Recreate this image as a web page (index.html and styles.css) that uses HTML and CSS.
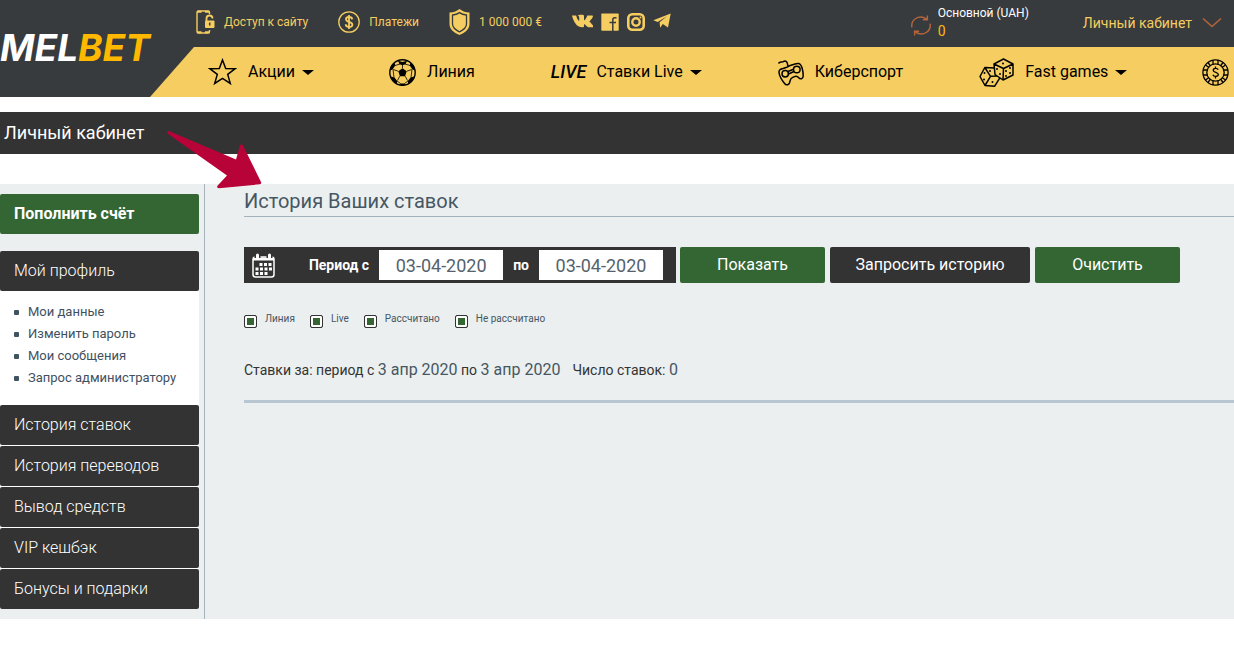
FILE: index.html
```html
<!DOCTYPE html>
<html lang="ru">
<head>
<meta charset="utf-8">
<title>Личный кабинет</title>
<link rel="stylesheet" href="styles.css">
</head>
<body>
<header class="header">
  <a class="logo" href="#"><span>MEL</span><span class="logo-accent">BET</span></a>
  <div class="topbar">
    <a class="top-link" href="#">
      <svg width="19" height="24" viewBox="0 0 19 24" fill="none" stroke="currentColor"><path d="M13.500 4V2.500q0-1.500-1.500-1.500H2.500Q1 1 1 2.500v19Q1 23 2.500 23H12q1.500 0 1.500-1.500V20" stroke-width="1.400"/><path d="M1 1.700h12.500M1 22.300h12.500" stroke-width="2" stroke-dasharray="4.500 3.500"/><path d="M10.500 11V8.500a3 3 0 0 1 6 0" stroke-width="1.800"/><rect x="9" y="10.500" width="9.500" height="7.500" rx="1" fill="currentColor" stroke="none"/><path d="M13.700 12.500v3" stroke="#373b3e" stroke-width="1.500"/></svg>
      <span>Доступ к сайту</span></a>
    <a class="top-link" href="#">
      <svg width="22" height="22" viewBox="0 0 22 22" fill="none" stroke="currentColor"><circle cx="11" cy="11" r="10.200" stroke-width="1.300"/><path d="M14.200 8.300c-.3-3.400-6.200-3.200-6.200-.1 0 3.500 6.400 1.800 6.400 5.500 0 3.200-6.600 3.200-6.700-.4M11 4v14" stroke-width="1.800"/></svg>
      <span>Платежи</span></a>
    <a class="top-link" href="#">
      <svg width="21" height="26" viewBox="0 0 21 26"><path d="M10.500 0C13 2 16 3.300 20.500 3.500V15c0 5-4 8.500-10 11C4.500 23.500.5 20 .5 15V3.500C5 3.300 8 2 10.500 0z" fill="currentColor"/><path d="M10.500 3.600c2 1.400 4.200 2.100 7 2.400v9c0 3.200-2.700 5.800-7 7.800-4.300-2-7-4.600-7-7.800V6c2.800-.3 5-1 7-2.400z" fill="none" stroke="#373b3e" stroke-width="1.300"/></svg>
      <span>1 000 000 €</span></a>
    <div class="social">
      <a href="#" aria-label="VK"><svg width="21" height="18" viewBox="0 0 21 18" fill="currentColor"><path d="M0 2.500h4.200c.5 2.500 1.700 5 3 5.500V4.200c0-1-.6-1.200-1.400-1.400C6.500 1.800 8 1.600 9.500 1.700c1.800 0 2.500.2 2.500 1.500v4.200c1.300-.3 2.700-3.200 3.300-4.900h4.900c.6 0 .9.400.7.900-.5 1.800-2.500 3.900-3.500 5.100.9 1.200 3.200 3 3.900 4.600.3.700 0 1.200-.8 1.200h-4.100c-1.400 0-2.800-2.800-4.400-3.200v1.800c0 .9-.4 1.400-1.300 1.400C4.500 14.500 1.500 8.500 0 2.500z"/></svg></a>
      <a href="#" aria-label="Facebook"><svg width="18" height="18" viewBox="0 0 18 18"><path d="M1 .5h16q.7 0 .7.700v15.900q0 .7-.7.700H1q-.7 0-.7-.7V1.200Q.3.500 1 .500z" fill="currentColor"/><path d="M15.500 4.700h-1.700q-2 0-2 2V18M8.500 9.500h6.500" fill="none" stroke="#373b3e" stroke-width="1.500"/></svg></a>
      <a href="#" aria-label="Instagram"><svg width="18" height="18" viewBox="0 0 18 18" fill="none" stroke="currentColor"><rect x="1.300" y="1.300" width="15.400" height="15.400" rx="4" stroke-width="2.600"/><circle cx="9" cy="9" r="3.700" stroke-width="2.400"/><circle cx="13.500" cy="4.500" r="1" fill="currentColor" stroke="none"/></svg></a>
      <a href="#" aria-label="Telegram"><svg width="18" height="18" viewBox="0 0 18 18" fill="currentColor"><path d="M17.700.5 15 14.600l-5.200-3.500-2.700 3.700-.5-5.500L14 3.300 4.700 9 .3 7.300z"/></svg></a>
    </div>
    <div class="account">
      <div class="balance">
        <svg class="rust" width="20" height="21" viewBox="0 0 21 21" fill="none" stroke="currentColor" stroke-width="1.500"><path d="M1 12.500C-.5 5 8-2 16.500 3.800M12.500 4.500h4.700V0M20 8.500c1.500 7.500-7 14.500-15.500 8.700M8.500 16.500H3.800V21"/></svg>
        <div><div class="balance-name">Основной (UAH)</div><div class="balance-value">0</div></div>
      </div>
      <a class="cabinet" href="#"><span>Личный кабинет</span>
        <svg class="rust" width="20" height="10" viewBox="0 0 20 10" fill="none" stroke="currentColor" stroke-width="1.500"><path d="m1 .5 9 8 9-8"/></svg></a>
    </div>
  </div>
  <nav class="nav">
    <a class="nav-item" href="#"><svg width="29" height="28" viewBox="0 0 29 28" fill="none" stroke="currentColor" stroke-width="1.500"><path d="m14.500 2 3.200 8.500 9.300.3-7.300 5.600 2.600 9-7.800-5.100-7.800 5.100 2.600-9L2 10.800l9.300-.3z"/></svg><span>Акции</span><i class="caret"></i></a>
    <a class="nav-item" href="#"><svg width="27" height="27" viewBox="0 0 27 27"><circle cx="13.500" cy="13.500" r="12.700" fill="none" stroke="currentColor" stroke-width="1.400"/><g fill="currentColor"><path d="m13.500 9.200 4.200 3.100-1.600 4.900h-5.200l-1.600-4.900zM9 1.800l4.500 1.200L18 1.800l-1.500 3.500-3 1-3-1zM1 11.500l2.500-1 2.800-4-.8-3L2 7zM26 11.500l-2.500-1-2.800-4 .8-3L25 7zM1.800 17.500l3.700 1 2.500 3.200v3.800l-4-3zM25.200 17.500l-3.700 1-2.500 3.200v3.800l4-3zM11 24.500h5l-1 2.500h-3z"/></g><path d="M13.500 9V6M9.200 12.200l-5-1.700M17.800 12.200l5-1.700M10.800 17.200 8.500 21.500M16.200 17.200l2.300 4.300M6 6.500l5-1.500M21 6.500 16 5M4 10.500l1 8M23 10.500l-1 8M8 22l3.500 2.500M19 22l-3.500 2.500" fill="none" stroke="currentColor" stroke-width=".8"/></svg><span>Линия</span></a>
    <a class="nav-item" href="#"><span class="live">LIVE</span><span>Ставки Live</span><i class="caret"></i></a>
    <a class="nav-item" href="#"><svg width="27" height="27" viewBox="0 0 27 27" fill="none" stroke="currentColor" stroke-width="1.500"><path d="M1.500 4.500C3 2 5 4 7 2.200c3-1.300 3.500 2.500 4 5.100M6 9.500c2.500-1 4.300-1.200 6.500-2.700C16 5.500 19 4 22 4.600c3 .9 4.200 7.900 4.200 12.200 0 3.400-2.900 3.800-4.700 1.700-1.200-1.500-2.700-1.500-4-.9l-2.200 1c-1.500.7-2 1.800-2.200 3.200-.5 4.300-3.700 5.200-5.700 2.500C4.700 21 2.300 16.500 2 13.300 1.800 11.200 3.500 10 6 9.500z"/><circle cx="8.200" cy="14.800" r="3.200"/><circle cx="19.800" cy="10.500" r="3.300"/><path d="m11 12.500 5.500-2.300M11.500 15l5.500-2.500"/></svg><span>Киберспорт</span></a>
    <a class="nav-item" href="#"><svg width="35" height="30" viewBox="0 0 35 30" fill="none" stroke="currentColor" stroke-width="1.500" stroke-linejoin="round"><path d="m24.500 2 9.500 5v11l-10 5-8-5.500L15 7zM15 7l9.500 4.500L34 7M24.500 11.500 24 23M15.500 11 5.800 10.500 1 19.500l5 9 9.700.7 5-8M5.800 10.500l5.700 8.800L6 28.500M11.500 19.300l6.500-.3"/><g fill="currentColor" stroke="none"><circle cx="24" cy="6.500" r="1"/><circle cx="18" cy="12" r="1"/><circle cx="21" cy="17" r="1"/><circle cx="27" cy="14" r="1"/><circle cx="31" cy="11" r="1"/><circle cx="27" cy="19" r="1"/><circle cx="31" cy="16" r="1"/><circle cx="5.500" cy="16" r="1"/><circle cx="5" cy="22.500" r="1"/><circle cx="11" cy="14" r="1"/><circle cx="13.500" cy="25" r="1"/></g></svg><span>Fast games</span><i class="caret"></i></a>
    <a class="nav-item" href="#" aria-label="Казино"><svg width="27" height="27" viewBox="0 0 27 27" fill="none" stroke="currentColor" stroke-width="1.300"><circle cx="13.500" cy="13.500" r="12.600"/><circle cx="13.500" cy="13.500" r="8.700"/><path d="M11 1v4.500M16 1v4.500M11 21.500V26M16 21.500V26M1 11h4.500M1 16h4.500M21.500 11H26M21.500 16H26M3.500 6 7 8.500M6 3.500 8.500 7M23.500 6 20 8.500M21 3.500 18.500 7M3.500 21 7 18.500M6 23.500 8.500 20M23.500 21 20 18.500M21 23.500 18.500 20M16.200 10.700c-1-2.200-5.300-1.500-4.900.9.400 2.300 5 1.400 5 3.900 0 2.300-4.700 2.500-5.400.2M13.500 7.500v2M13.500 17.500v2"/></svg></a>
  </nav>
</header>

<h1 class="page-title">Личный кабинет</h1>

<div class="layout">
  <aside class="sidebar">
    <a class="side-btn deposit" href="#">Пополнить счёт</a>
    <a class="side-btn" href="#">Мой профиль</a>
    <ul class="submenu">
      <li><a href="#">Мои данные</a></li>
      <li><a href="#">Изменить пароль</a></li>
      <li><a href="#">Мои сообщения</a></li>
      <li><a href="#">Запрос администратору</a></li>
    </ul>
    <div class="side-list">
      <a class="side-btn" href="#">История ставок</a>
      <a class="side-btn" href="#">История переводов</a>
      <a class="side-btn" href="#">Вывод средств</a>
      <a class="side-btn" href="#">VIP кешбэк</a>
      <a class="side-btn" href="#">Бонусы и подарки</a>
    </div>
  </aside>
  <main class="main">
    <svg class="pointer" width="98" height="62" viewBox="0 0 98 62"><path d="M4 2 71 30.500 75 16.500q1.500-2.500 3 0L96 53q.8 2-1.200 2.300L54 59.300q-3-.3-1.300-2.800L62 46.500 2.500 4.500Q1.500 2.200 4 2z" fill="#b80338"/></svg>
    <h2 class="section-title">История Ваших ставок</h2>
    <form class="filters">
      <div class="period">
        <svg class="calendar" width="23" height="25" viewBox="0 0 23 25" fill="none" stroke="currentColor"><rect x="1" y="4" width="21" height="20" rx="2.500" stroke-width="1.500"/><path d="M1 6h21" stroke-width="3"/><path d="M5.500 1v4M17.500 1v4" stroke="#333" stroke-width="6"/><path d="M5.500 2v3M17.500 2v3" stroke-width="3" stroke-linecap="round"/><path d="M7.500 11.500h12.600M3.500 16h16.600M3.500 20.500h12" stroke-width="3" stroke-dasharray="3 1.500"/></svg>
        <label class="from" for="from">Период с</label><input id="from" type="text" value="03-04-2020">
        <label for="to">по</label><input id="to" type="text" value="03-04-2020">
      </div>
      <button class="btn" type="button">Показать</button>
      <button class="btn dark" type="button">Запросить историю</button>
      <button class="btn" type="button">Очистить</button>
    </form>
    <div class="checks">
      <label><input type="checkbox" checked><span>Линия</span></label>
      <label><input type="checkbox" checked><span>Live</span></label>
      <label><input type="checkbox" checked><span>Рассчитано</span></label>
      <label><input type="checkbox" checked><span>Не рассчитано</span></label>
    </div>
    <p class="summary"><span>Ставки за: период с <em>3 апр 2020</em> по <em>3 апр 2020</em></span><span>Число ставок: <em>0</em></span></p>
  </main>
</div>
</body>
</html>
```
FILE: styles.css
```css
* { box-sizing: border-box; }
body { margin: 0; background: #fff; font-family: Roboto, "Noto Sans", sans-serif; overflow-x: hidden; }
a { color: inherit; text-decoration: none; }
svg { flex: none; display: block; }

.header { display: grid; grid-template-columns: 150px minmax(0, 1fr); grid-template-rows: 47px 50px; background: #373b3e; }
.logo { grid-row: 1 / 3; align-self: center; display: flex; padding-bottom: 2px; font-family: Inter, sans-serif; font-size: 37px; line-height: 44px; font-weight: 700; font-style: italic; color: #fff; }
.logo-accent { color: #ffb800; }

.topbar { display: flex; align-items: center; gap: 30px; padding: 0 12px 3px 46px; color: #f5cd60; font-size: 12px; white-space: nowrap; }
.top-link { display: flex; align-items: center; gap: 9px; }
.social { display: flex; gap: 8px; }
.account { margin-left: auto; display: flex; align-items: center; gap: 54px; }
.balance { display: flex; align-items: center; gap: 7px; }
.balance > svg { margin-top: 6px; }
.balance-name { color: #fff; line-height: 18px; }
.balance-value { color: #ffb80c; font-size: 14px; line-height: 18px; }
.cabinet { display: flex; align-items: center; gap: 10px; font-size: 14px; padding-top: 2px; }
.rust { color: #b4653c; }

.nav { display: flex; align-items: center; gap: 76px; padding-left: 58px; overflow: hidden; background: #f5cd60; color: #000; clip-path: polygon(44px 0, 100% 0, 100% 100%, 0 100%); font-size: 16px; white-space: nowrap; }
.nav-item { display: flex; align-items: center; flex: none; gap: 11px; }
.nav-item span { padding-bottom: 2px; }
.caret { border: 6px solid transparent; border-top: 5px solid #000; border-bottom: 0; margin: 0 -1px 0 -4px; }
.live { font-style: italic; font-weight: 500; font-size: 18px; margin-right: -1px; }

.page-title { margin: 15px 0 30px; padding: 0 4px; background: #333; color: #fff; font-size: 18px; font-weight: 400; line-height: 42px; }

.layout { display: grid; grid-template-columns: 205px minmax(0, 1fr); background: #ebeff0; }
.sidebar { padding: 10px 5px 10px 0; border-right: 1px solid #a5b4bd; }
.side-btn { display: block; padding: 0 14px; border-radius: 2px; background: #333; color: #fff; font-size: 16px; font-weight: 300; line-height: 40px; }
.deposit { background: #346633; font-weight: 700; margin-bottom: 17px; }
.submenu { list-style: none; margin: 0; padding: 10px 14px 16px; background: #fff; color: #3f5160; font-size: 13px; line-height: 22px; }
.submenu li { display: flex; align-items: center; gap: 9px; white-space: nowrap; }
.submenu li::before { content: ""; width: 5px; height: 5px; border-radius: 1px; background: #3f5360; }
.side-list { display: grid; gap: 1px; background: #fff; }

.main { position: relative; padding-left: 39px; color: #333; }
.pointer { position: absolute; left: -40px; top: -55px; }
.section-title { margin: 0 0 30px; padding-top: 2px; border-bottom: 1px solid #a3b3be; color: #465762; font-size: 20px; font-weight: 400; line-height: 30px; }
.filters { display: flex; gap: 5px; }
.period { display: flex; align-items: center; width: 432px; height: 36px; margin-right: -1px; padding: 0 13px 0 8px; background: #333; color: #fff; font-size: 14px; font-weight: 700; }
.from { margin-left: auto; }
.period label { margin-right: 10px; white-space: nowrap; }
.period input { width: 124px; height: 30px; border: 0; padding: 0; background: #fff; color: #56626b; font: 400 18px Roboto, sans-serif; text-align: center; }
.period input + label { margin-left: 10px; }
.btn { flex: 0 1 145px; height: 36px; border: 0; border-radius: 2px; padding: 0 0 2px; background: #346633; color: #fff; font: 400 16px Roboto, sans-serif; white-space: nowrap; }
.btn.dark { flex-basis: 200px; background: #333; }
.checks { display: flex; gap: 15px; margin-top: 30px; color: #465762; font-size: 10px; line-height: 12px; }
.checks label { display: flex; align-items: flex-start; gap: 8px; }
.checks input { appearance: none; width: 13px; height: 13px; margin: 2px 0 0; border: 1px solid #333; border-radius: 2px; background: #346633; box-shadow: inset 0 0 0 2px #fff; }
.summary { display: flex; align-items: baseline; gap: 12px; margin: 30px 0 0; padding-bottom: 18px; border-bottom: 3px solid #b8c6d1; font-size: 14px; line-height: 24px; }
.summary em { font-style: normal; font-size: 16px; color: #465762; }
```
